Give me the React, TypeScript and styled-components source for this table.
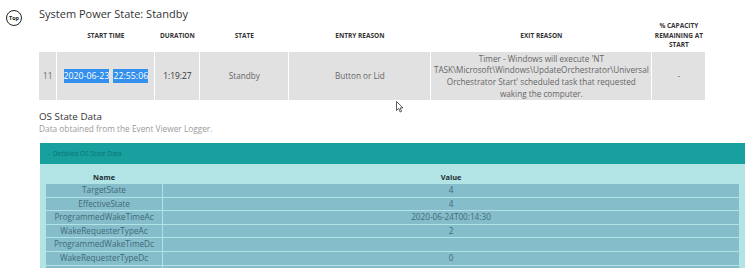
import styled, { createGlobalStyle } from "styled-components";

const GlobalStyle = createGlobalStyle`
  html, body {
    margin: 0;
    padding: 0;
    background: #ffffff;
    font-family: "Open Sans", "Noto Sans", sans-serif;
  }
`;

const Page = styled.div`
  position: relative;
  width: 750px;
  height: 268px;
  overflow: hidden;
  padding: 0 5px 0 6px;
  box-sizing: border-box;
`;

const TitleRow = styled.div`
  display: flex;
  align-items: flex-start;
  gap: 17px;
  padding-top: 5px;
`;

const TopBadge = styled.div`
  margin-top: 5px;
  width: 14px;
  height: 14px;
  border: 1px solid #222;
  border-radius: 50%;
  display: flex;
  align-items: center;
  justify-content: center;
  font-size: 5.5px;
  font-weight: 700;
  color: #222;
`;

const Title = styled.h1`
  margin: 0;
  font-size: 11px;
  font-weight: 400;
  color: #333;
  line-height: 18px;
`;

const Content = styled.div`
  margin-left: 33px;
`;

const PowerTable = styled.table`
  border-collapse: separate;
  border-spacing: 1px 0;
  margin-left: -1px;
  margin-top: -7px;
  table-layout: fixed;
`;

const HeadCell = styled.th<{ $w: number }>`
  width: ${(p) => p.$w}px;
  padding: 0;
  font-size: 6.5px;
  font-weight: 700;
  color: #333;
  text-transform: uppercase;
  line-height: 9.5px;
  height: 33px;
  vertical-align: middle;
  text-align: center;
`;

const Cell = styled.td<{ $dark?: boolean; $pad?: number }>`
  background: #e1e1e1;
  height: 48px;
  padding: 0 ${(p) => p.$pad ?? 4}px;
  font-size: ${(p) => (p.$dark ? "8.4px" : "8.2px")};
  color: ${(p) => (p.$dark ? "#333" : "#666")};
  text-align: center;
  vertical-align: middle;
  line-height: 11.6px;
  box-sizing: border-box;
`;

const Selected = styled.span`
  background: #3390ec;
  color: #fff;
  font-size: 8.8px;
  padding: 1px 0;
  & + & {
    margin-left: 4px;
  }
`;

const Section = styled.div`
  margin-top: 10px;
`;

const SectionTitle = styled.div`
  font-size: 9.8px;
  color: #333;
  line-height: 13px;
`;

const SectionSub = styled.div`
  font-size: 8.3px;
  color: #9a9a9a;
  line-height: 12px;
`;

const Panel = styled.div`
  margin: 8px 0 0 34px;
  width: 705px;
  background: #b3e4e5;
  padding-bottom: 20px;
`;

const PanelBar = styled.div`
  height: 21px;
  background: #18a09f;
  display: flex;
  align-items: center;
  padding-left: 7px;
  font-size: 6.5px;
  color: #0c7574;
  gap: 4px;
`;

const StateTable = styled.table`
  margin: 6px 0 0 5px;
  border-collapse: separate;
  border-spacing: 1px 1px;
  table-layout: fixed;
  width: 695px;
`;

const StateHead = styled.th<{ $w?: number }>`
  ${(p) => (p.$w ? `width: ${p.$w}px;` : "")}
  font-size: 7.4px;
  font-weight: 700;
  color: #1e2e33;
  height: 12px;
  line-height: 12px;
  padding: 0;
  text-align: center;
`;

const StateCell = styled.td`
  background: #86bdca;
  height: 12.6px;
  line-height: 12.6px;
  padding: 0;
  font-size: 8.2px;
  color: #3f6a78;
  text-align: center;
  white-space: nowrap;
`;

const Cursor = styled.svg`
  position: absolute;
  left: 396px;
  top: 101px;
`;

const columns = [
  { label: "", w: 17 },
  { label: "Start Time", w: 97 },
  { label: "Duration", w: 44 },
  { label: "State", w: 88 },
  { label: "Entry Reason", w: 141 },
  { label: "Exit Reason", w: 220 },
  { label: "% Capacity Remaining At Start", w: 53 },
];

const osRows: [string, string][] = [
  ["TargetState", "4"],
  ["EffectiveState", "4"],
  ["ProgrammedWakeTimeAc", "2020-06-24T00:14:30"],
  ["WakeRequesterTypeAc", "2"],
  ["ProgrammedWakeTimeDc", ""],
  ["WakeRequesterTypeDc", "0"],
  ["", ""],
];

export default function App() {
  return (
    <Page>
      <GlobalStyle />
      <TitleRow>
        <TopBadge>Top</TopBadge>
        <Title>System Power State: Standby</Title>
      </TitleRow>
      <Content>
        <PowerTable>
          <thead>
            <tr>
              {columns.map((c, i) => (
                <HeadCell key={i} $w={c.w}>
                  {c.label}
                </HeadCell>
              ))}
            </tr>
          </thead>
          <tbody>
            <tr>
              <Cell>11</Cell>
              <Cell $pad={2}>
                <Selected>2020-06-23</Selected>
                <Selected>22:55:06</Selected>
              </Cell>
              <Cell $dark>1:19:27</Cell>
              <Cell>Standby</Cell>
              <Cell>Button or Lid</Cell>
              <Cell $pad={2}>
                Timer - Windows will execute 'NT
                TASK\Microsoft\Windows\UpdateOrchestrator\Universal
                Orchestrator Start' scheduled task that requested
                <br />
                waking the computer.
              </Cell>
              <Cell>-</Cell>
            </tr>
          </tbody>
        </PowerTable>
        <Section>
          <SectionTitle>OS State Data</SectionTitle>
          <SectionSub>Data obtained from the Event Viewer Logger.</SectionSub>
        </Section>
      </Content>
      <Panel>
        <PanelBar>
          <span>-</span>
          <span>Detailed OS State Data</span>
        </PanelBar>
        <StateTable>
          <thead>
            <tr>
              <StateHead $w={116}>Name</StateHead>
              <StateHead>Value</StateHead>
            </tr>
          </thead>
          <tbody>
            {osRows.map(([n, v], i) => (
              <tr key={i}>
                <StateCell>{n}</StateCell>
                <StateCell>{v}</StateCell>
              </tr>
            ))}
          </tbody>
        </StateTable>
      </Panel>
      <Cursor width="8" height="12" viewBox="0 0 8 12">
        <path
          d="M0.5 0.5 L0.5 9.5 L2.7 7.4 L4.2 11 L5.6 10.4 L4.1 6.9 L7 6.9 Z"
          fill="#fff"
          stroke="#333"
          strokeWidth="0.8"
          strokeLinejoin="round"
        />
      </Cursor>
    </Page>
  );
}
